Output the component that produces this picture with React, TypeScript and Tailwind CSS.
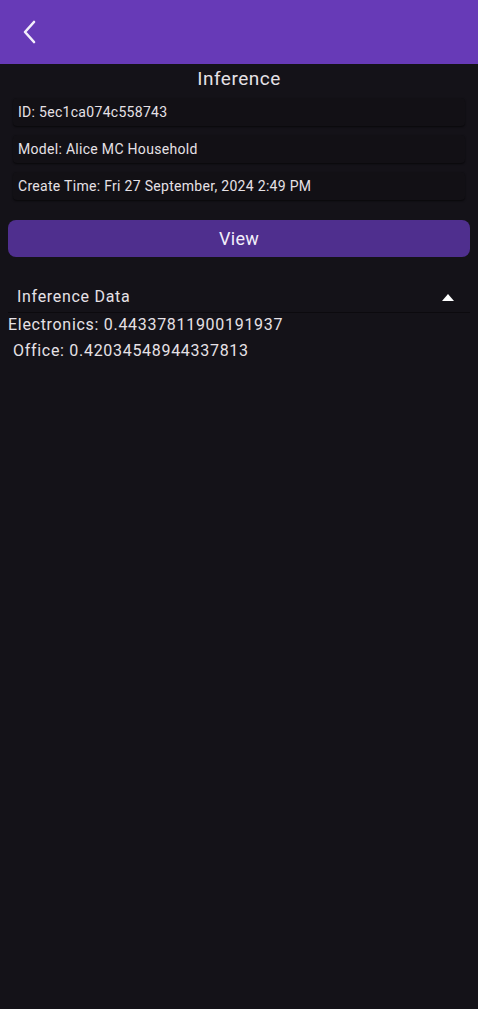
import React from "react";

function InfoCard({ text }: { text: string }) {
  return (
    <div className="mx-[13px] h-[28px] flex items-center px-[5px] bg-[#121015] rounded-[4px] shadow-[0_1px_2px_rgba(0,0,0,0.6)]">
      <span className="text-[14px] text-[#e6e1e6] tracking-[0.3px]">{text}</span>
    </div>
  );
}

export default function App() {
  return (
    <div
      className="w-[478px] h-[1009px] bg-[#141218] flex flex-col"
      style={{ fontFamily: "Roboto, 'Noto Sans', sans-serif" }}
    >
      <div className="h-[64px] bg-[#673ab7] flex items-center px-[20px] shrink-0">
        <svg width="20" height="26" viewBox="0 0 20 26" fill="none">
          <path d="M14 3 L5 13 L14 23" stroke="#f3eefb" strokeWidth="2.6" strokeLinecap="round" strokeLinejoin="round" />
        </svg>
      </div>
      <div className="text-center text-[19px] tracking-[0.5px] text-[#e6e1e6] leading-[28px] mt-[1px]">Inference</div>
      <div className="flex flex-col gap-[9px] mt-[5px]">
        <InfoCard text="ID: 5ec1ca074c558743" />
        <InfoCard text="Model: Alice MC Household" />
        <InfoCard text="Create Time: Fri 27 September, 2024 2:49 PM" />
      </div>
      <button className="mx-[8px] mt-[20px] h-[37px] rounded-[8px] bg-[#4f2f8e] text-[18px] tracking-[0.3px] text-[#f3eefb] flex items-center justify-center">
        View
      </button>
      <div className="mx-[8px] mt-[25px] h-[31px] border-b border-[#0c0a0e] flex items-center justify-between pl-[9px] pr-[16px]">
        <span className="text-[16px] tracking-[0.7px] text-[#e6e1e6]">Inference Data</span>
        <svg width="12" height="7" viewBox="0 0 12 7">
          <path d="M0 7 L6 0 L12 7 Z" fill="#ffffff" />
        </svg>
      </div>
      <div className="pl-[8px] text-[16px] tracking-[0.7px] text-[#e6e1e6] leading-[26px] -mt-[1px]">Electronics: 0.44337811900191937</div>
      <div className="pl-[13px] text-[16px] tracking-[0.7px] text-[#e6e1e6] leading-[26px]">Office: 0.42034548944337813</div>
    </div>
  );
}
